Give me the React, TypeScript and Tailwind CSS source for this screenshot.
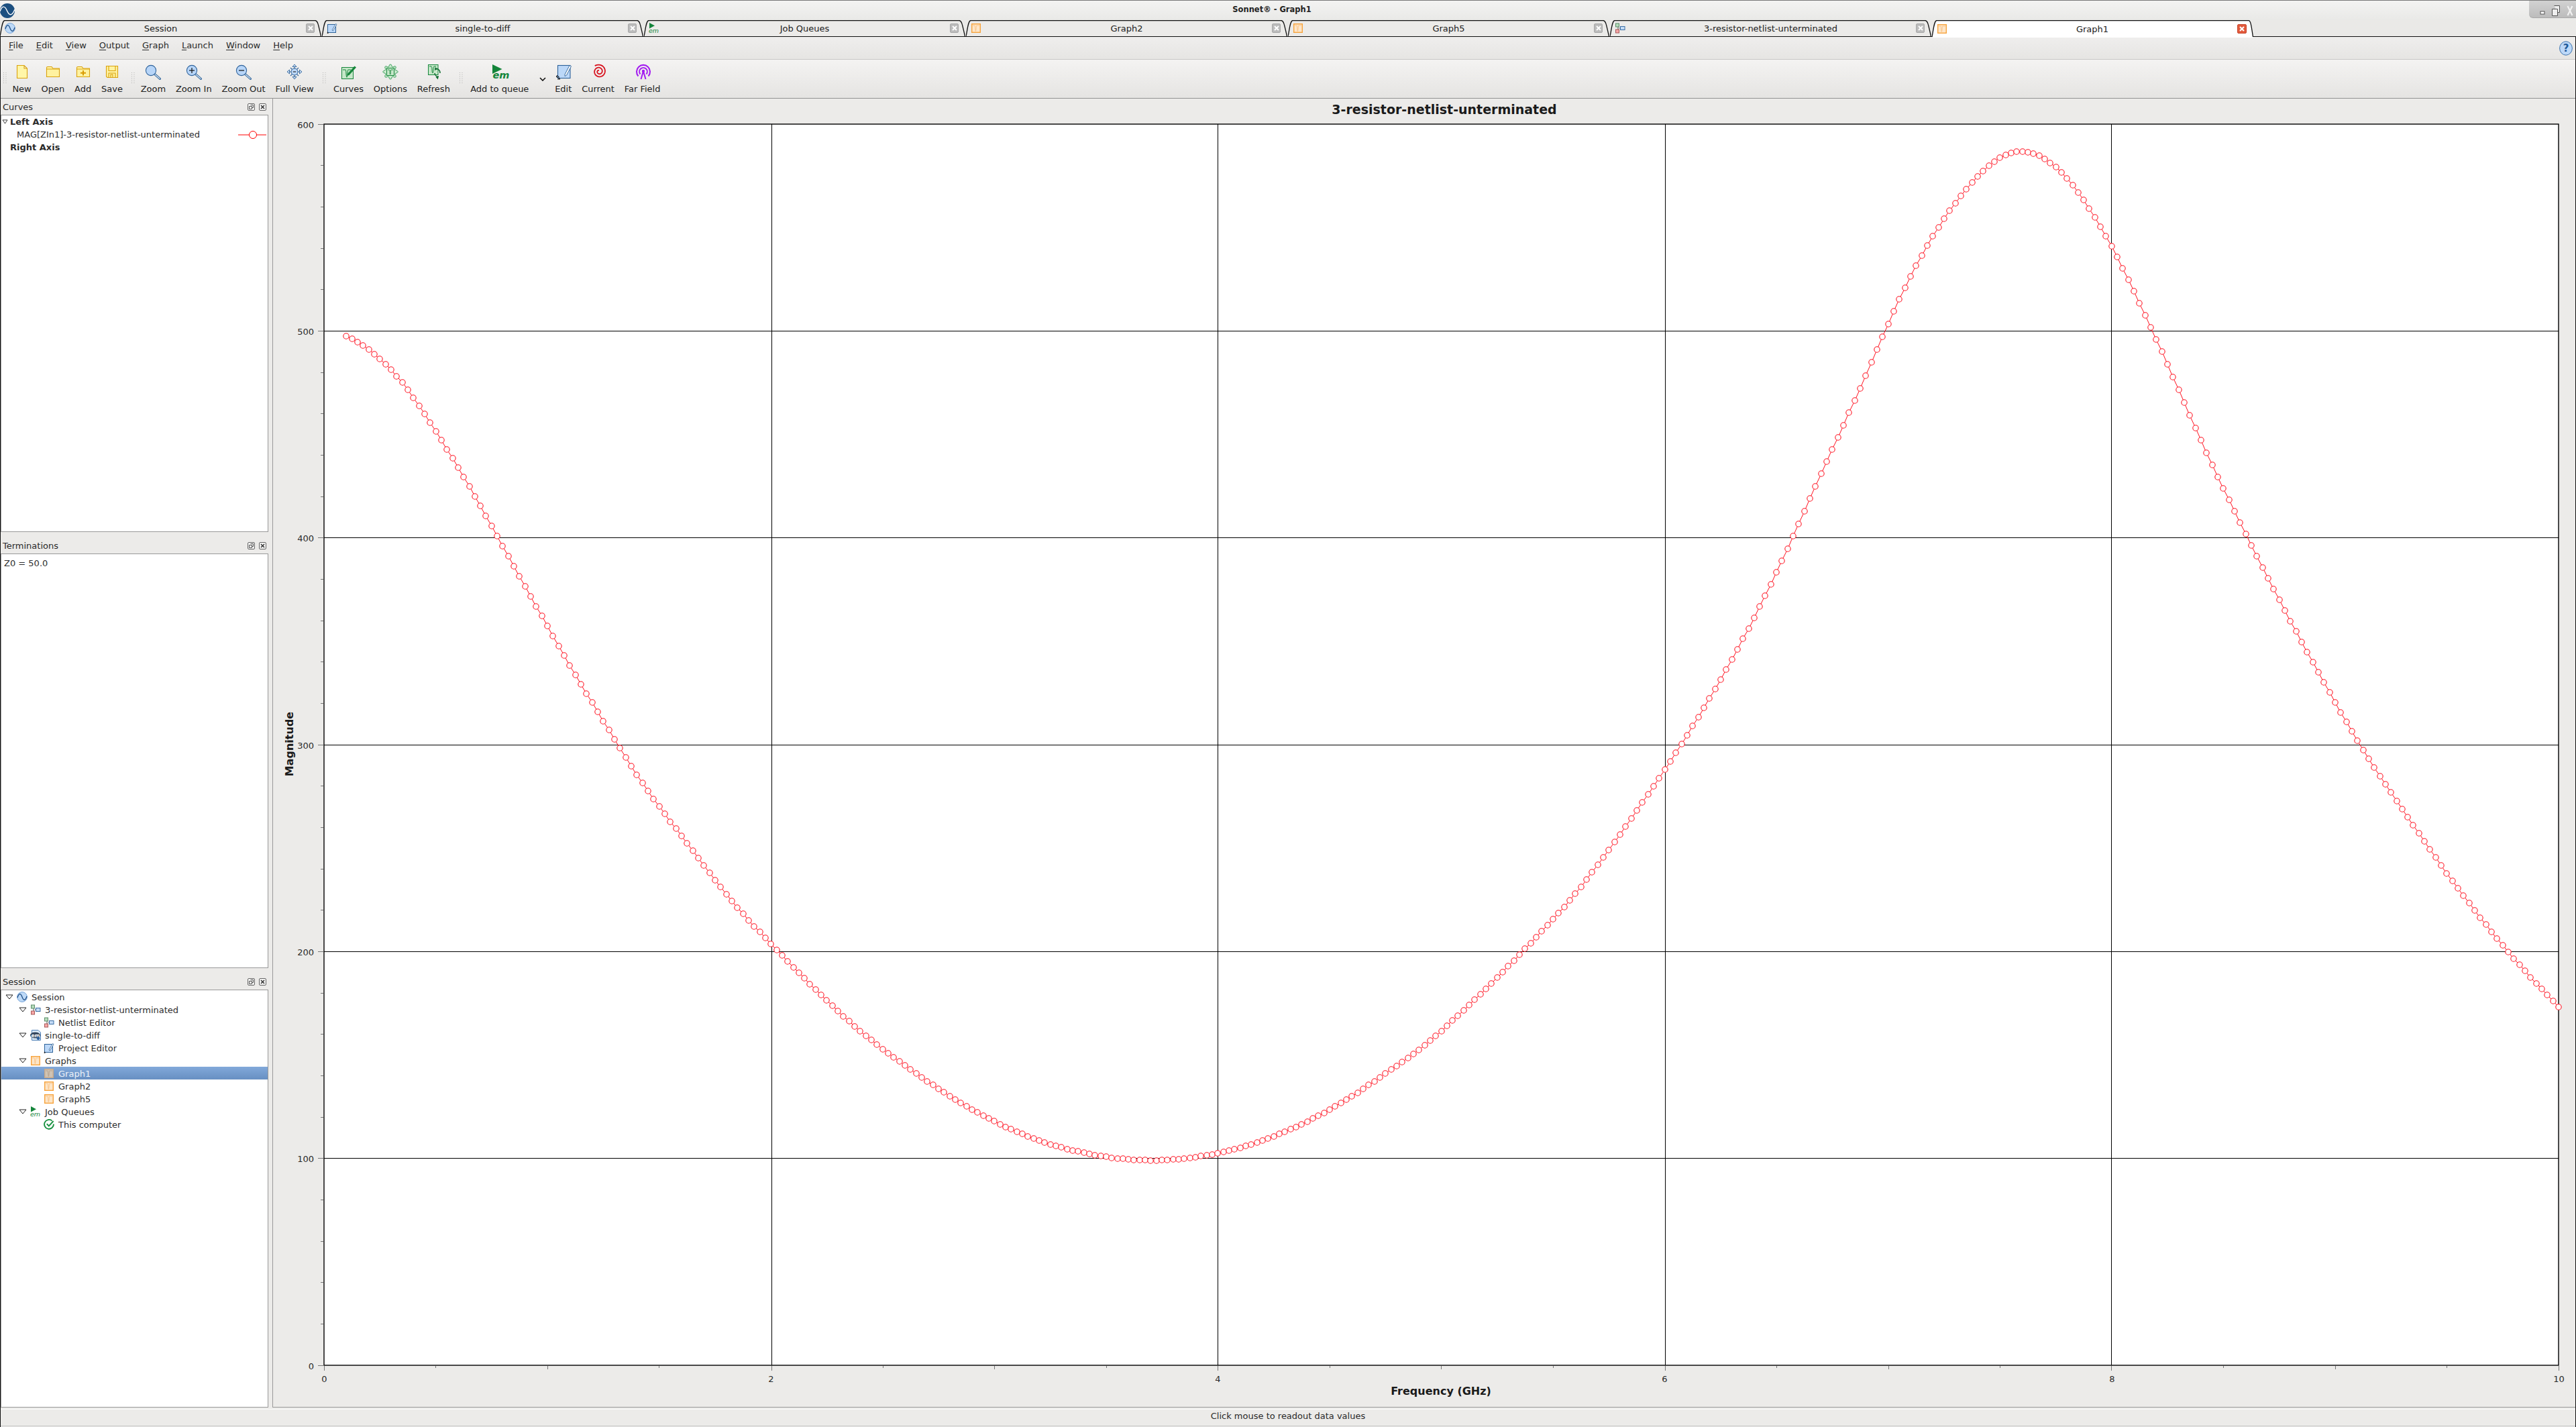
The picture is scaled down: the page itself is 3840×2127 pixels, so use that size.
import React from "react";

const knots: [number, number][] = [
  [-0.1, 503],[0.099,498.4],[0.198,491.6],[0.271,485],[0.357,474.8],[0.421,465],[0.478,455.3],[0.549,443],[0.625,429.6],[0.702,415],[0.778,400.5],[0.852,386],[0.925,371.8],[1.0,357.2],[1.075,343],[1.174,324.7],[1.27,308],[1.327,298],[1.394,286],[1.474,273.8],[1.563,260.8],[1.659,247.7],[1.754,233.6],[1.882,217],[2.0,203.7],[2.105,191.8],[2.233,178],[2.36,165],[2.52,151],[2.68,138.6],[2.87,125.2],[3.06,114.5],[3.25,106.5],[3.445,101.5],[3.57,99.6],[3.73,98.8],[3.86,100],[4.0,102.2],[4.179,107.6],[4.37,116],[4.56,127],[4.75,141],[4.91,153],[5.0,161.5],[5.19,180.7],[5.38,201.8],[5.557,222],[5.73,245.8],[5.86,266],[6.0,287.6],[6.115,307],[6.27,335],[6.4,361],[6.5,383],[6.58,401.7],[6.67,424],[6.8,454.5],[6.9,478],[7.0,504],[7.1,527],[7.2,546.4],[7.295,561.7],[7.4,575.5],[7.5,585],[7.6,588],[7.69,585],[7.79,576],[7.885,562.5],[8.0,541.8],[8.09,521.5],[8.19,498.5],[8.316,467.9],[8.44,437],[8.6,401.7],[8.76,367.6],[8.92,335.8],[9.11,299.4],[9.3,268.8],[9.53,233],[9.77,199.9],[10.0,173],[10.2,153],
];

function interp(f: number) {
  for (let i = 1; i < knots.length; i++) {
    if (f <= knots[i][0]) {
      const [a, b] = knots[i - 1];
      const [c, d] = knots[i];
      return b + ((d - b) * (f - a)) / (c - a);
    }
  }
  return knots[knots.length - 1][1];
}

function buildCurve() {
  const step = 0.025;
  const pad = 8;
  let v: number[] = [];
  for (let i = -pad; i <= 396 + pad; i++) v.push(interp(0.1 + i * step));
  for (let pass = 0; pass < 2; pass++) {
    v = v.map((_, i) => {
      const from = Math.max(0, i - 2);
      const to = Math.min(v.length - 1, i + 2);
      let s = 0;
      for (let k = from; k <= to; k++) s += v[k];
      return s / (to - from + 1);
    });
  }
  return v.slice(pad, 397 + pad).map((m, i) => ({
    x: Math.round(483 + (0.1 + i * step) * 333.1),
    y: Math.round(2035 - m * 3.0833),
  }));
}
const curve = buildCurve();
const curvePoints = curve.map((p) => `${p.x},${p.y}`).join(" ");

function gearPath() {
  let d = "";
  for (let i = 0; i <= 96; i++) {
    const t = (i / 96) * Math.PI * 2;
    const r = 9.4 + 1.9 * Math.max(-0.8, Math.min(0.8, Math.cos(8 * t)));
    d += `${i ? "L" : "M"}${(12 + r * Math.cos(t)).toFixed(2)} ${(12 + r * Math.sin(t)).toFixed(2)}`;
  }
  return d + "Z";
}

function spiralPath() {
  let d = "";
  const n = 80;
  for (let i = 0; i <= n; i++) {
    const u = i / n;
    const t = 0.3 + u * Math.PI * 4.2;
    const r = 1.6 + u * 8.8;
    d += `${i ? "L" : "M"}${(13 + r * Math.cos(-t + 5.0)).toFixed(2)} ${(11.5 + r * Math.sin(-t + 5.0)).toFixed(2)}`;
  }
  return d;
}

const SessionIcon = () => (
  <svg viewBox="0 0 16 16" className="h-[16px] w-[16px] shrink-0">
    <circle cx="8" cy="8" r="7.4" fill="#bdd9f7" stroke="#79a6da" strokeWidth="1" />
    <path d="M1 9C3.5 1.5 6 2.5 8 8S12.5 14.5 15 7" fill="none" stroke="#1f4f86" strokeWidth="1.3" />
  </svg>
);
const NetlistIcon = () => (
  <svg viewBox="0 0 16 16" className="h-[16px] w-[16px] shrink-0">
    <path d="M5 5V11M7 8H10" stroke="#555" strokeWidth="1" fill="none" />
    <rect x="1.5" y="1" width="5" height="5" fill="#b7dcbc" stroke="#5c8e6b" />
    <rect x="1.5" y="10" width="5" height="5" fill="#f6a7a7" stroke="#a65a5a" />
    <rect x="8.5" y="5.5" width="6.5" height="5" fill="#c5dcf6" stroke="#3b6ea5" />
  </svg>
);
const EmDocIcon = () => (
  <svg viewBox="0 0 16 16" className="h-[16px] w-[16px] shrink-0">
    <path d="M2.5.5H12L15.5 4V15.5H2.5Z" fill="#dcebfa" stroke="#4d7fb5" />
    <ellipse cx="7.5" cy="8" rx="7.5" ry="4.6" fill="#34465c" />
    <text x="1.5" y="10.5" fontSize="7.5" fontWeight="700" fill="#fff">em</text>
    <circle cx="12" cy="12.5" r="2.4" fill="#2d5f9b" />
  </svg>
);
const EditSmallIcon = () => (
  <svg viewBox="0 0 16 16" className="h-[16px] w-[16px] shrink-0">
    <rect x="1.5" y="2.5" width="12" height="12" fill="#bcd8f8" stroke="#2d6299" />
    <path d="M8 11L13.5 1.5L15 2.5L9.5 12Z" fill="#fff" stroke="#2d6299" strokeWidth=".8" />
    <path d="M.5 15H3M1.5 13.5V16" stroke="#111" strokeWidth=".8" />
  </svg>
);
const GraphIcon = ({ selected = false }: { selected?: boolean }) => (
  <svg viewBox="0 0 16 16" className="h-[16px] w-[16px] shrink-0">
    <rect x="1.7" y="1.7" width="12.6" height="12.6" fill={selected ? "#d0c3b3" : "#fde6c9"} stroke={selected ? "#c8a988" : "#f7a33c"} strokeWidth="1.4" />
    <path d="M3 4H6.2C6.8 4 6.6 12.5 7.4 12.5S8 4 8.8 4H13" fill="none" stroke={selected ? "#b9a793" : "#f9c891"} strokeWidth="1.1" />
  </svg>
);
const JobIcon = () => (
  <svg viewBox="0 0 16 16" className="h-[16px] w-[16px] shrink-0">
    <path d="M1 0V8.5L9 4.3Z" fill="#14853a" />
    <text x="0" y="15.4" fontSize="9.5" fontStyle="italic" fill="#14853a">em</text>
  </svg>
);
const CheckIcon = () => (
  <svg viewBox="0 0 16 16" className="h-[16px] w-[16px] shrink-0">
    <path d="M12.5 2.6A6.9 6.9 0 1 0 14.9 7.5" fill="none" stroke="#17913f" strokeWidth="1.9" />
    <path d="M4.8 7.2L7.8 10.4L14.6 3" fill="none" stroke="#17913f" strokeWidth="1.9" />
  </svg>
);
const Triangle = () => (
  <svg viewBox="0 0 12 8" className="h-[8px] w-[12px] shrink-0">
    <path d="M1 1H11L6 7Z" fill="#fff" stroke="#222" strokeWidth="1" />
  </svg>
);

const iconStroke = "#d9a20f";

function Lens({ mark }: { mark?: "plus" | "minus" }) {
  return (
    <>
      <path d="M14.5 15.5L22.5 22.5" stroke="#33679c" strokeWidth="3" strokeLinecap="round" />
      <path d="M15 16L22 22" stroke="#d6e6f6" strokeWidth="1.2" strokeLinecap="round" />
      <circle cx="9" cy="10" r="7.6" fill="#b7d5f8" stroke="#2f639b" strokeWidth="1.1" />
      {mark && <path d="M5 10H13" stroke="#111" strokeWidth="1.2" />}
      {mark === "plus" && <path d="M9 6V14" stroke="#111" strokeWidth="1.2" />}
    </>
  );
}

const ToolIcons: Record<string, React.ReactNode> = {
  New: <path d="M4.5 2.5H15L19.5 7V21.5H4.5Z M15 2.5V7H19.5" fill="#fff6a8" stroke={iconStroke} strokeWidth="1.1" />,
  Open: (
    <>
      <path d="M2.5 6Q2.5 4.5 4 4.5H10L12 7H21.5V19.5H2.5Z" fill="#fff2a0" stroke={iconStroke} strokeWidth="1.1" />
      <path d="M2.5 8H21.5" stroke={iconStroke} strokeWidth="1" />
    </>
  ),
  Add: (
    <>
      <path d="M2.5 6Q2.5 4.5 4 4.5H10L12 7H21.5V19.5H2.5Z" fill="#fff2a0" stroke={iconStroke} strokeWidth="1.1" />
      <path d="M2.5 8H21.5" stroke={iconStroke} strokeWidth="1" />
      <path d="M12 10V17.5M8 13.7H16" stroke="#d99a00" strokeWidth="2" />
    </>
  ),
  Save: (
    <>
      <path d="M3.5 3.5H20.5V20.5H5L3.5 19Z" fill="#fff2a0" stroke={iconStroke} strokeWidth="1.1" />
      <path d="M7 3.5V10.5H17V3.5M7 20.5V14H17V20.5M10 20V16H13V20" fill="none" stroke={iconStroke} strokeWidth="1.1" />
    </>
  ),
  Zoom: <Lens />,
  "Zoom In": <Lens mark="plus" />,
  "Zoom Out": <Lens mark="minus" />,
  "Full View": (
    <>
      <path d="M12 1L9 4.5H15ZM12 23L9 19.5H15ZM1 12L4.5 9V15ZM23 12L19.5 9V15Z" fill="#cfe2f7" stroke="#2f639b" strokeWidth=".9" />
      <path d="M12 4.5V7M12 17V19.5M4.5 12H7M17 12H19.5M6 6L8.5 8.5M18 18L15.5 15.5M18 6L15.5 8.5M6 18L8.5 15.5" stroke="#2f639b" strokeWidth="1.1" />
      <circle cx="12" cy="12" r="5" fill="#bcd8f8" stroke="#2f639b" />
      <path d="M9.8 12H14.2" stroke="#1b1b1b" strokeWidth="1.1" />
    </>
  ),
  Curves: (
    <>
      <rect x="2.5" y="5.5" width="17" height="17" fill="#c6e7c9" stroke="#17863b" />
      <path d="M4 9H8C9.5 9 8.5 20 10 20S10.5 9 12 9H16" fill="none" stroke="#17863b" strokeWidth="1.1" />
      <path d="M11 15L21.5 3.5L24 5.5L13.5 17L10.5 18Z" fill="#17863b" />
    </>
  ),
  Options: (
    <>
      <path d={gearPath()} fill="#cbe9ce" stroke="#2d9a50" strokeWidth="1" />
      <rect x="6.5" y="6.5" width="11" height="11" fill="#c6e7c9" stroke="#17863b" />
      <path d="M8 9H10.5C11.5 9 10.8 16 11.7 16S12 9 13 9H16" fill="none" stroke="#17863b" strokeWidth=".9" />
    </>
  ),
  Refresh: (
    <>
      <rect x="4.5" y="1.5" width="14.5" height="15" fill="#c6e7c9" stroke="#17863b" />
      <path d="M6 4H9C10.5 4 9.5 14 11 14S11.5 4 13 4H16" fill="none" stroke="#17863b" strokeWidth="1" />
      <path d="M15 7.5A6 6 0 0 1 22 14" fill="none" stroke="#0f6d30" strokeWidth="1.6" />
      <path d="M20 19.5A6 6 0 0 1 14 14" fill="none" stroke="#0f6d30" strokeWidth="1.6" />
      <path d="M14.5 5L14 10L18 8ZM19 23.5L19.5 18L15.5 20Z" fill="#0f6d30" />
    </>
  ),
  "Add to queue": (
    <>
      <path d="M1 1V15L15.5 8Z" fill="#14853a" />
      <text x="1.5" y="22.3" fontSize="14.5" fontStyle="italic" fontWeight="700" fill="#14853a">em</text>
    </>
  ),
  Edit: (
    <>
      <rect x="3.5" y="2.5" width="18.5" height="19" fill="#bcd8f8" stroke="#2d6299" strokeWidth="1.1" />
      <path d="M14 16L21 2.5L23.5 3.8L16.5 17.2L14 18.5Z" fill="#fff" stroke="#2d6299" strokeWidth=".9" />
      <path d="M1 19H5V23M3 17L1 19L3 21M3 23H7L5 21" fill="none" stroke="#111" strokeWidth=".9" />
    </>
  ),
  Current: <path d={spiralPath()} fill="none" stroke="#d8111d" strokeWidth="1.8" />,
  "Far Field": (
    <>
      <path d="M5.5 18.5A10 10 0 1 1 20.5 18.5" fill="none" stroke="#a31cf0" strokeWidth="2.1" />
      <path d="M8.5 15.5A5.8 5.8 0 1 1 17.5 15.5" fill="none" stroke="#a31cf0" strokeWidth="2" />
      <path d="M13 11L9.5 23M13 11L16.5 23" fill="none" stroke="#a31cf0" strokeWidth="2" />
      <circle cx="13" cy="11" r="2.2" fill="#a31cf0" />
    </>
  ),
};

const GripDots = () => (
  <svg width="5" height="17" viewBox="0 0 5 17">
    {[0, 3, 6, 9, 12, 15].map((y) => (
      <g key={y} fill="#b5b5b3">
        <rect x="0" y={y} width="1" height="1" />
        <rect x="3.5" y={y} width="1" height="1" />
      </g>
    ))}
  </svg>
);

function Grip({ first = false, narrow = false }: { first?: boolean; narrow?: boolean }) {
  const cls = first
    ? "flex w-[10px] shrink-0 justify-center pt-[19px] pl-[2px]"
    : narrow
      ? "flex w-[12px] shrink-0 justify-center pt-[19px] pl-[5px]"
      : "flex w-[14.5px] shrink-0 justify-center pt-[19px] pl-[3px]";
  return (
    <div className={cls}>
      <GripDots />
    </div>
  );
}

function ToolButton({ label }: { label: string }) {
  return (
    <div className="flex shrink-0 flex-col items-center px-[7.4px] pt-[6px]">
      <svg viewBox="0 0 24 24" className="h-[24px] w-[24px] overflow-visible">
        {ToolIcons[label]}
      </svg>
      <span className="mt-[6px] text-[13px] leading-[16px] whitespace-nowrap text-[#222]">{label}</span>
    </div>
  );
}

const tabs: { name: string; icon: React.ReactNode; active?: boolean }[] = [
  { name: "Session", icon: <SessionIcon /> },
  { name: "single-to-diff", icon: <EditSmallIcon /> },
  { name: "Job Queues", icon: <JobIcon /> },
  { name: "Graph2", icon: <GraphIcon /> },
  { name: "Graph5", icon: <GraphIcon /> },
  { name: "3-resistor-netlist-unterminated", icon: <NetlistIcon /> },
  { name: "Graph1", icon: <GraphIcon />, active: true },
];

function Tab({ name, icon, active }: { name: string; icon: React.ReactNode; active?: boolean }) {
  return (
    <div className={active ? "relative z-10 -mb-[2px] flex h-[26px] w-[480px] shrink-0 items-center pr-[11px] pl-[7px]" : "relative flex h-[24px] w-[480px] shrink-0 items-center pr-[11px] pl-[7px]"}>
      <svg className="absolute top-0 left-0 h-full w-full" viewBox={active ? "0 0 480 26" : "0 0 480 24"} preserveAspectRatio="none">
        {active ? (
          <path d="M0 26C2 16 3 .6 7 .6H472C475 .6 476 8 478.5 26Z" fill="#fff" stroke="none" />
        ) : (
          <path d="M0 24C2 16 3 .6 7 .6H470C474 .6 475 10 478.5 24Z" fill="#ecebe9" stroke="none" />
        )}
        <path d={active ? "M0 25C2 16 3 .6 7 .6H472C475 .6 476 8 478.5 25" : "M0 24C2 16 3 .6 7 .6H470C474 .6 475 10 478.5 24"} fill="none" stroke="#111" strokeWidth="1.3" />
      </svg>
      <span className="relative">{icon}</span>
      <span className="relative flex-1 pt-[2px] text-center text-[13px] whitespace-nowrap text-[#222]">{name}</span>
      <span className={active ? "relative flex h-[14px] w-[14px] items-center justify-center rounded-[2px] border border-[#c9452a] bg-[#e25b3d]" : "relative flex h-[14px] w-[13px] items-center justify-center rounded-[2px] border border-[#a8a8a8] bg-[#bcbcbc]"}>
        <svg viewBox="0 0 8 8" className="h-[8px] w-[8px]">
          <path d="M1 1L7 7M7 1L1 7" stroke="#fff" strokeWidth="2" />
        </svg>
      </span>
    </div>
  );
}

const menu = ["File", "Edit", "View", "Output", "Graph", "Launch", "Window", "Help"];

function DockHeader({ title }: { title: string }) {
  return (
    <div className="flex h-[24px] shrink-0 items-center justify-between pr-[3px] pl-[3px] text-[13px] text-[#2a2a2a]">
      <span className="pt-[2px]">{title}</span>
      <div className="flex gap-[6px]">
        <svg viewBox="0 0 11 11" className="h-[11px] w-[11px]">
          <rect x=".5" y=".5" width="10" height="10" rx="1.5" fill="#f4f4f3" stroke="#666" />
          <path d="M4.5 2.5H8.5V6.5H6.5M2.5 4.5H6.5V8.5H2.5Z" fill="none" stroke="#555" />
        </svg>
        <svg viewBox="0 0 11 11" className="h-[11px] w-[11px]">
          <rect x=".5" y=".5" width="10" height="10" rx="1.5" fill="#f4f4f3" stroke="#666" />
          <path d="M3 3L8 8M8 3L3 8" stroke="#333" strokeWidth="1.5" />
        </svg>
      </div>
    </div>
  );
}

const levels = ["pl-[6px]", "pl-[26px]", "pl-[63px]"];

function TreeRow({ level, icon, text, selected, expander = true }: { level: number; icon: React.ReactNode; text: string; selected?: boolean; expander?: boolean }) {
  return (
    <div className={`flex h-[19px] items-center text-[13px] ${levels[level]} ${selected ? "bg-linear-to-b from-[#82a9da] to-[#678fc2] text-[#edf2f8]" : "text-[#2e2e2e]"}`}>
      {expander && (
        <span className="mr-[5px]">
          <Triangle />
        </span>
      )}
      {icon}
      <span className="ml-[6px] pt-[2px] whitespace-nowrap">{text}</span>
    </div>
  );
}

const yMajor = [0, 100, 200, 300, 400, 500, 600];
const yMinor = Array.from({ length: 31 }, (_, i) => i * 20).filter((v) => v % 100 !== 0);
const xMajor = [0, 2, 4, 6, 8, 10];
const xMinor = Array.from({ length: 21 }, (_, i) => i * 0.5).filter((v) => v % 2 !== 0);
const yOf = (m: number) => Math.floor(2035 - m * 3.0833) + 0.5;
const xOf = (f: number) => Math.round(482.8 + f * 333.1) + 0.5;
const gridX: Record<number, number> = { 2: 1150.5, 4: 1815.5, 6: 2482.5, 8: 3147.5 };

function Chart() {
  return (
    <svg viewBox="407 180 3432 1916" className="block h-[1916px] w-[3432px]">
      <rect x="483" y="185" width="3331" height="1850" fill="#fff" />
      {yMajor.slice(1, -1).map((m) => (
        <line key={m} x1="483" x2="3814" y1={yOf(m)} y2={yOf(m)} stroke="#000" strokeWidth="1" shapeRendering="crispEdges" />
      ))}
      {xMajor.slice(1, -1).map((f) => (
        <line key={f} x1={gridX[f]} x2={gridX[f]} y1="185" y2="2035" stroke="#000" strokeWidth="1" shapeRendering="crispEdges" />
      ))}
      <rect x="483" y="185" width="3331" height="1850" fill="none" stroke="#000" strokeWidth="1.4" />
      {yMajor.map((m) => (
        <g key={m}>
          <line x1="474" x2="482" y1={yOf(m)} y2={yOf(m)} stroke="#777" shapeRendering="crispEdges" />
          <text x="468" y={Math.round(yOf(m)) + 5} textAnchor="end" className="fill-[#2a2a2a] text-[13px]">{m}</text>
        </g>
      ))}
      {yMinor.map((m) => (
        <line key={m} x1="478" x2="482" y1={yOf(m)} y2={yOf(m)} stroke="#777" shapeRendering="crispEdges" />
      ))}
      {xMajor.map((f) => (
        <g key={f}>
          <line x1={gridX[f] ?? xOf(f)} x2={gridX[f] ?? xOf(f)} y1="2036" y2="2043" stroke="#777" shapeRendering="crispEdges" />
          <text x={xOf(f)} y="2060" textAnchor="middle" className="fill-[#2a2a2a] text-[13px]">{f}</text>
        </g>
      ))}
      {xMinor.map((f) => (
        <line key={f} x1={xOf(f)} x2={xOf(f)} y1="2036" y2={f % 1 === 0 ? 2041 : 2039} stroke="#777" shapeRendering="crispEdges" />
      ))}
      <polyline points={curvePoints} fill="none" stroke="#ff1220" strokeWidth="1" />
      {curve.map((p, i) => (
        <circle key={i} cx={p.x} cy={p.y} r="4.2" fill="#fff" stroke="#ff1826" strokeWidth="1.1" />
      ))}
      <text x="2148" y="2079" textAnchor="middle" className="fill-[#1a1a1a] text-[16px] font-bold">Frequency (GHz)</text>
      <text transform="translate(437 1109) rotate(-90)" textAnchor="middle" className="fill-[#1a1a1a] text-[16px] font-bold">Magnitude</text>
    </svg>
  );
}

export default function App() {
  return (
    <div className="flex h-[2127px] w-[3840px] flex-col overflow-hidden bg-[#ecebe9] font-['DejaVu_Sans','Liberation_Sans',sans-serif]">
      {/* window title */}
      <div className="flex h-[30px] shrink-0 border-t border-t-[#777] bg-linear-to-b from-[#f3f3f2] to-[#e9e9e7]">
        <svg viewBox="0 0 22 22" className="mt-[4px] h-[22px] w-[22px] shrink-0">
          <circle cx="11" cy="11" r="11" fill="#1c4f80" />
          <path d="M0 12C3 3 7 3 10.5 11S18 19 22 9" fill="none" stroke="#fff" strokeWidth="1.4" />
        </svg>
        <div className="flex-1 pt-[5px] text-center text-[11.5px] leading-[16px] font-bold text-[#222]">Sonnet® - Graph1</div>
        <div className="flex h-[26px] w-[70px] shrink-0 items-center justify-end gap-[9px] rounded-bl-[6px] border-b border-b-[#a8a8a8] bg-linear-to-b from-[#d2d2d2] to-[#bcbcbc] pt-[5px] pr-[4px]">
          <svg viewBox="0 0 8 8" className="mt-[6px] h-[8px] w-[8px]"><rect x="1" y="2" width="6" height="4" fill="#fff" stroke="#555" /></svg>
          <svg viewBox="0 0 14 18" className="h-[18px] w-[14px]"><path d="M4.5 1.5H12.5V11.5H9.5M1.5 6.5H9.5V16.5H1.5Z" fill="#eee" stroke="#555" /></svg>
          <svg viewBox="0 0 10 18" className="h-[18px] w-[10px]"><path d="M1.5 2L8.5 16M8.5 2L1.5 16" stroke="#f2f2f2" strokeWidth="2.2" /></svg>
        </div>
      </div>

      {/* tab strip */}
      <div className="flex h-[24px] shrink-0 bg-[#eae9e7]">
        {tabs.map((t) => (
          <Tab key={t.name} {...t} />
        ))}
      </div>

      <div className="flex min-h-0 flex-1 flex-col border-t border-r border-l border-[#111]">
        {/* menu bar */}
        <div className="flex h-[34px] shrink-0 items-center justify-between border-b border-b-[#c9c8c6] bg-linear-to-b from-[#efeeed] to-[#e6e5e3] pr-[4px] pl-[12px]">
          <div className="flex gap-[19px] self-start pt-[5px] text-[13px] leading-[16px] text-[#2a2a2a]">
            {menu.map((m) => (
              <span key={m}>
                <span className="underline decoration-1 underline-offset-2">{m[0]}</span>
                {m.slice(1)}
              </span>
            ))}
          </div>
          <svg viewBox="0 0 20 22" className="h-[22px] w-[20px]">
            <ellipse cx="10" cy="11" rx="9.4" ry="10.2" fill="#bcd8f8" stroke="#3d73ad" />
            <text x="10" y="16" textAnchor="middle" fontSize="15" fontWeight="700" fill="#1f5a99">?</text>
          </svg>
        </div>

        {/* tool bar */}
        <div className="flex h-[58px] shrink-0 border-b border-b-[#929292] bg-linear-to-b from-[#f4f3f2] to-[#e5e4e2]">
          <Grip first />
          <ToolButton label="New" />
          <ToolButton label="Open" />
          <ToolButton label="Add" />
          <ToolButton label="Save" />
          <Grip narrow />
          <ToolButton label="Zoom" />
          <ToolButton label="Zoom In" />
          <ToolButton label="Zoom Out" />
          <ToolButton label="Full View" />
          <Grip />
          <ToolButton label="Curves" />
          <ToolButton label="Options" />
          <ToolButton label="Refresh" />
          <Grip />
          <div className="w-[1px]" />
          <ToolButton label="Add to queue" />
          <div className="flex w-[24px] shrink-0 justify-center pt-[26px] pl-[3px]">
            <svg viewBox="0 0 10 6" className="h-[6px] w-[10px]"><path d="M1 1L5 5L9 1" fill="none" stroke="#111" strokeWidth="1.6" /></svg>
          </div>
          <ToolButton label="Edit" />
          <ToolButton label="Current" />
          <ToolButton label="Far Field" />
        </div>

        {/* work area */}
        <div className="flex min-h-0 flex-1">
          <div className="flex w-[405px] shrink-0 flex-col gap-[8px] pr-[6px]">
            <div className="flex flex-col">
              <DockHeader title="Curves" />
              <div className="h-[622px] border border-[#999] bg-white">
                <div className="flex h-[19px] items-center pl-[1px] text-[13px] font-bold text-[#2a2a2a]">
                  <svg viewBox="0 0 10 8" className="mr-[3px] h-[7px] w-[9px]"><path d="M1 1H9L5 7Z" fill="#fff" stroke="#222" /></svg>
                  Left Axis
                </div>
                <div className="flex h-[19px] items-center justify-between pr-[2px] pl-[23px] text-[13px] text-[#2e2e2e]">
                  <span>MAG[ZIn1]-3-resistor-netlist-unterminated</span>
                  <svg viewBox="0 0 42 14" className="h-[14px] w-[42px]">
                    <path d="M0 7H42" stroke="#f00" strokeWidth="1" />
                    <circle cx="22" cy="7" r="5.5" fill="#fff" stroke="#f00" strokeWidth="1" />
                  </svg>
                </div>
                <div className="flex h-[19px] items-center pl-[13px] text-[13px] font-bold text-[#2a2a2a]">Right Axis</div>
              </div>
            </div>
            <div className="flex flex-col">
              <DockHeader title="Terminations" />
              <div className="h-[618px] border border-[#999] bg-white pt-[4px] pl-[4px] text-[13px] leading-[19px] text-[#2e2e2e]">Z0 = 50.0</div>
            </div>
            <div className="flex min-h-0 flex-1 flex-col">
              <DockHeader title="Session" />
              <div className="flex-1 border border-[#999] bg-white">
                <TreeRow level={0} icon={<SessionIcon />} text="Session" />
                <TreeRow level={1} icon={<NetlistIcon />} text="3-resistor-netlist-unterminated" />
                <TreeRow level={2} icon={<NetlistIcon />} text="Netlist Editor" expander={false} />
                <TreeRow level={1} icon={<EmDocIcon />} text="single-to-diff" />
                <TreeRow level={2} icon={<EditSmallIcon />} text="Project Editor" expander={false} />
                <TreeRow level={1} icon={<GraphIcon />} text="Graphs" />
                <TreeRow level={2} icon={<GraphIcon selected />} text="Graph1" expander={false} selected />
                <TreeRow level={2} icon={<GraphIcon />} text="Graph2" expander={false} />
                <TreeRow level={2} icon={<GraphIcon />} text="Graph5" expander={false} />
                <TreeRow level={1} icon={<JobIcon />} text="Job Queues" />
                <TreeRow level={2} icon={<CheckIcon />} text="This computer" expander={false} />
              </div>
            </div>
          </div>

          <div className="flex min-w-0 flex-1 flex-col border-b border-l border-[#999]">
            <div className="flex h-[33px] shrink-0 items-center justify-center pl-[60px] text-[19px] font-bold text-[#1a1a1a]">3-resistor-netlist-unterminated</div>
            <Chart />
          </div>
        </div>

        {/* status bar */}
        <div className="flex h-[29px] shrink-0 flex-col pt-[2px]">
          <div className="flex h-[26px] justify-center border-t border-b border-t-[#fafafa] border-b-[#c5c5c5] pt-[2px] text-[13px] leading-[16px] text-[#2a2a2a]">Click mouse to readout data values</div>
        </div>
      </div>
    </div>
  );
}
